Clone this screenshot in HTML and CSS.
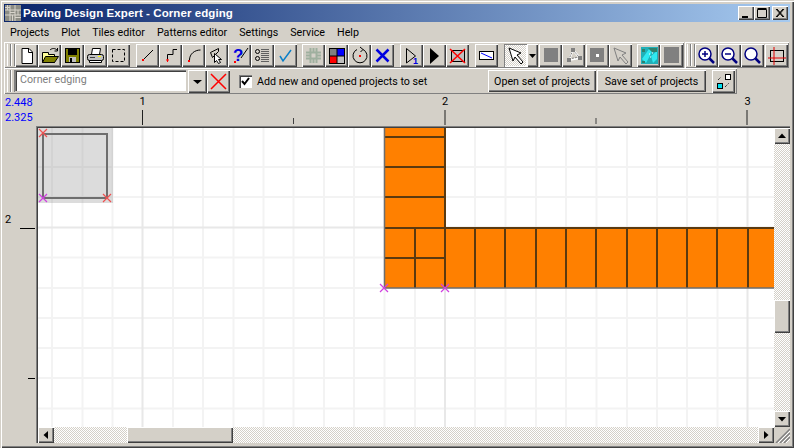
FILE: index.html
```html
<!DOCTYPE html>
<html lang="en">
<head>
<meta charset="utf-8">
<title>Paving Design Expert - Corner edging</title>
<link rel="stylesheet" href="styles.css">
</head>
<body>
<div class="window">
  <header class="titlebar">
    <svg class="appicon" width="16" height="16" viewBox="0 0 16 16"><rect width="16" height="16" fill="#8c8c84"/><path d="M0 5h16M0 10h16M5 0v16M10 0v16M2.500 0v5M13 5v5M7.500 10v6M0 2.500h5M5 7.500h5M10 12.500h6" stroke="#d8d4cc" fill="none"/></svg>
    <span class="title-text">Paving Design Expert - Corner edging</span>
    <div class="caption-btns">
      <button class="capbtn"><svg width="16" height="14" viewBox="0 0 16 14"><path d="M4 10.500h6M4 11.500h6" stroke="#000"/></svg></button>
      <button class="capbtn"><svg width="16" height="14" viewBox="0 0 16 14"><path d="M3.500 3.500h9v8h-9zM3.500 2.500h9" stroke="#000" fill="none"/></svg></button>
      <button class="capbtn capclose"><svg width="16" height="14" viewBox="0 0 16 14"><path d="M4 3l7 8M5 3l7 8M11 3l-7 8M12 3l-7 8" stroke="#000"/></svg></button>
    </div>
  </header>
  <nav class="menubar">
    <span>Projects</span><span>Plot</span><span>Tiles editor</span><span>Patterns editor</span><span>Settings</span><span>Service</span><span>Help</span>
  </nav>

  <div class="toolrow">
    <div class="toolbar tb-main">
      <i class="grip"></i>
      <button class="tb"><svg viewBox="0 0 23 23"><path d="M7 4.500h7l3.500 3.500v11.500H7z" fill="#fff" stroke="#000"/><path d="M13.500 4.500v4h4" fill="none" stroke="#000"/></svg></button>
      <button class="tb"><svg viewBox="0 0 23 23"><path d="M4.500 18.500v-10h6v2h6v8z" fill="#ffff99" stroke="#000"/><path d="M4.500 18.500l3-6h13l-4 6z" fill="#808000" stroke="#000"/><path d="M12 6c2-2 5-2 7 0M19.500 4v3h-3" fill="none" stroke="#000"/></svg></button>
      <button class="tb"><svg viewBox="0 0 23 23"><rect x="4.500" y="4.500" width="14" height="14" fill="#808000" stroke="#000"/><rect x="7" y="5" width="9" height="6" fill="#000"/><rect x="8" y="13" width="7" height="5" fill="#c0c0c0"/><rect x="9" y="14" width="2" height="4" fill="#000"/></svg></button>
      <button class="tb"><svg viewBox="0 0 23 23"><path d="M8.500 4.500h8l-1 6h-8z" fill="#fff" stroke="#000"/><rect x="3.500" y="10.500" width="16" height="6" rx="2" fill="#c0c0c0" stroke="#000"/><path d="M5.500 16.500h12v2h-12z" fill="#fff" stroke="#000"/><path d="M14 12.500h3" stroke="#ff0"/><path d="M6 13.500h5" stroke="#404040"/></svg></button>
      <button class="tb"><svg viewBox="0 0 23 23"><rect x="5.500" y="5.500" width="12" height="12" fill="none" stroke="#000" stroke-dasharray="3 2"/></svg></button>
      <i class="sep"></i>
      <button class="tb"><svg viewBox="0 0 23 23"><path d="M7 16L17 6" stroke="#000" fill="none"/><rect x="6" y="15" width="2" height="2" fill="#f00"/></svg></button>
      <button class="tb"><svg viewBox="0 0 23 23"><path d="M8.500 16v-5.500h5.500V5.500h4" stroke="#000" fill="none"/><path d="M7 16h3M8.500 15v3" stroke="#f00"/></svg></button>
      <button class="tb"><svg viewBox="0 0 23 23"><path d="M7.500 16c0-6 5-10 11-10" stroke="#000" fill="none"/><rect x="6" y="16" width="2" height="2" fill="#f00"/></svg></button>
      <button class="tb"><svg viewBox="0 0 23 23"><path d="M5.500 8.500l8-4v3l-6 6z" fill="none" stroke="#000"/><path d="M9.500 9.500v9l2-2 2 3 2-1-2-3h3z" fill="#fff" stroke="#000"/></svg></button>
      <button class="tb"><svg viewBox="0 0 23 23"><text class="qmark" x="5" y="17">?</text><path d="M13 14l7-10" stroke="#000"/><rect x="6" y="17" width="2" height="2" fill="#f00"/></svg></button>
      <button class="tb"><svg viewBox="0 0 23 23"><circle cx="6.500" cy="7.500" r="2" fill="none" stroke="#000"/><circle cx="6.500" cy="14.500" r="2" fill="none" stroke="#000"/><path d="M10 5.500h8M10 7.500h8M10 9.500h8M10 11.500h8M10 13.500h8M10 15.500h8M10 17.500h8" stroke="#606060"/></svg></button>
      <button class="tb"><svg viewBox="0 0 23 23"><path d="M6 12l3 5 8-11" stroke="#0a7fc8" stroke-width="1.500" fill="none"/></svg></button>
      <i class="sep-m"></i>
      <button class="tb"><svg viewBox="0 0 23 23"><path d="M4 8.500h15M4 14.500h15M8.500 4v15M14.500 4v15M4 11.500h4M15 11.500h4M11.500 4v4M11.500 15v4" stroke="#9fb09f" stroke-width="2" fill="none"/></svg></button>
      <button class="tb"><svg viewBox="0 0 23 23"><rect x="4" y="4" width="16" height="16" fill="#000"/><rect x="5" y="5" width="6.500" height="6.500" fill="#808080"/><rect x="12.500" y="5" width="6.500" height="6.500" fill="#00f"/><rect x="5" y="12.500" width="6.500" height="6.500" fill="#f00"/><rect x="12.500" y="12.500" width="6.500" height="6.500" fill="#c0c0c0"/></svg></button>
      <button class="tb"><svg viewBox="0 0 23 23"><path d="M15 5.500a7 7 0 1 1-6 0" fill="none" stroke="#000"/><path d="M12 3l3 2.500-2.500 2.500" fill="none" stroke="#000"/><rect x="11" y="11" width="2" height="2" fill="#f00"/></svg></button>
      <button class="tb"><svg viewBox="0 0 23 23"><path d="M5.500 5.500l12 12M17.500 5.500l-12 12" stroke="#0000e0" stroke-width="2.500"/></svg></button>
      <i class="sep"></i>
      <button class="tb"><svg viewBox="0 0 23 23"><path d="M6.500 4.500l9 7.500-9 7z" fill="none" stroke="#000"/><text class="one" x="13" y="20">1</text></svg></button>
      <button class="tb"><svg viewBox="0 0 23 23"><path d="M7 4l9 8-9 8z" fill="#000"/></svg></button>
      <button class="tb"><svg viewBox="0 0 23 23"><rect x="5.500" y="6.500" width="13" height="11" fill="#c0c0c0" stroke="#000"/><path d="M4 5l15 14M19 5L4 19" stroke="#f00" stroke-width="1.500"/></svg></button>
      <i class="sep"></i>
      <button class="tb"><svg viewBox="0 0 23 23"><rect x="4.500" y="7.500" width="14" height="8" fill="#fff" stroke="#000"/><path d="M6 9l11 5" stroke="#00f"/></svg></button>
      <i class="sep"></i>
      <button class="tb pressed"><svg viewBox="0 0 23 23"><path d="M5 4l4 13 2-4 6 7 2-2-6-7 4-2z" fill="#fff" stroke="#000"/></svg></button>
      <button class="tb tb-drop"><svg viewBox="0 0 11 23"><path d="M2 10h7l-3.500 4z" fill="#000"/></svg></button>
      <i class="sep-xs"></i>
      <button class="tb"><svg viewBox="0 0 23 23"><rect x="5" y="4" width="14" height="14" fill="#808080"/></svg></button>
      <button class="tb"><svg viewBox="0 0 23 23"><path d="M11 6l-4 10M11 6l7 8M7 16l11-2" stroke="#fff" stroke-width="2"/><path d="M11 6l-4 9M11 6l6 7M7 15l10-2" stroke="#808080" stroke-dasharray="2 1"/><rect x="9" y="4" width="4" height="4" fill="#808080"/><rect x="5" y="14" width="4" height="4" fill="#808080"/><rect x="16" y="12" width="4" height="4" fill="#808080"/></svg></button>
      <i class="sep-xs"></i>
      <button class="tb"><svg viewBox="0 0 23 23"><rect x="4" y="4" width="14" height="14" fill="#808080"/><rect x="10" y="10" width="3" height="3" fill="#fff"/></svg></button>
      <button class="tb"><svg viewBox="0 0 23 23"><path d="M5 4l4 13 2-4 6 7 2-2-6-7 4-2z" fill="#d4d0c8" stroke="#808080"/></svg></button>
      <i class="sep-m"></i>
      <button class="tb"><svg class="mosaic" viewBox="0 0 23 23"><rect x="4" y="3" width="17" height="17" fill="#20b0b8"/><path d="M5 15l7-10 3 3-6 11zM14 12l6-5v8l-4 4z" fill="#30e8f0"/><path d="M11 4h9v4h-5zM5 5h3v3H5zM5 17h3v2H5z" fill="#30806c"/><path d="M12 10h1M15 9h1M13 13h1" stroke="#fff"/></svg></button>
      <button class="tb"><svg viewBox="0 0 23 23"><rect x="4" y="3" width="15" height="16" fill="#808080"/></svg></button>
    </div>
    <div class="toolbar tb-zoom">
      <i class="grip"></i>
      <button class="tb"><svg viewBox="0 0 23 23"><circle cx="10" cy="10" r="6" fill="#fff" stroke="#000080" stroke-width="1.500"/><path d="M14.500 14.500l4.500 4.500" stroke="#000080" stroke-width="2.500"/><path d="M7 10h6M10 7v6" stroke="#000080" stroke-width="1.500"/></svg></button>
      <button class="tb"><svg viewBox="0 0 23 23"><circle cx="10" cy="10" r="6" fill="#fff" stroke="#000080" stroke-width="1.500"/><path d="M14.500 14.500l4.500 4.500" stroke="#000080" stroke-width="2.500"/><path d="M7 10h6" stroke="#000080" stroke-width="1.500"/></svg></button>
      <button class="tb"><svg viewBox="0 0 23 23"><circle cx="10" cy="10" r="6" fill="#fff" stroke="#000080" stroke-width="1.500"/><path d="M14.500 14.500l4.500 4.500" stroke="#000080" stroke-width="2.500"/></svg></button>
      <button class="tb tb-last"><svg viewBox="0 0 23 23"><rect x="5.500" y="6.500" width="13" height="11" fill="none" stroke="#000"/><path d="M3 14h18M9 3v18" stroke="#e00000"/></svg></button>
    </div>
  </div>

  <div class="toolbar tb-second">
    <i class="grip"></i>
    <div class="combo">Corner edging</div>
    <button class="tb tb-arrow"><svg viewBox="0 0 19 23"><path d="M5 10h9l-4.500 4z" fill="#000"/></svg></button>
    <button class="tb"><svg viewBox="0 0 23 23"><path d="M4 4l15 15M19 4L4 19" stroke="#f00" stroke-width="1.500"/></svg></button>
    <label class="check"><span class="box"><svg width="9" height="9" viewBox="0 0 9 9"><path d="M1 4l2.500 3L8 1" stroke="#000" stroke-width="2" fill="none"/></svg></span>Add new and opened projects to set</label>
    <button class="textbtn open">Open set of projects</button>
    <button class="textbtn save">Save set of projects</button>
    <button class="tb tb-link"><svg viewBox="0 0 23 23"><rect x="13.500" y="4.500" width="5" height="5" fill="#fff" stroke="#000"/><rect x="5.500" y="13.500" width="5" height="5" fill="#00e0f0" stroke="#000"/><path d="M6 10l3-3M13 17l4-4" stroke="#000" stroke-dasharray="1 1"/></svg></button>
  </div>

  <div class="workspace">
    <svg class="ruler-top" width="786" height="32" viewBox="4 94 786 32">
      <text class="coord" x="5" y="106">2.448</text>
      <text class="coord" x="5" y="121">2.325</text>
      <text class="rnum" x="139.500" y="105">1</text>
      <text class="rnum" x="442" y="105">2</text>
      <text class="rnum" x="744.500" y="105">3</text>
      <path d="M142.500 110v15M445 110v15M747 110v15" stroke="#202020" stroke-width="1"/>
      <path d="M293.500 118v6M596 118v6" stroke="#404040" stroke-width="1"/>
    </svg>
    <div class="work-row">
      <svg class="ruler-left" width="32" height="320" viewBox="4 126 32 320">
        <text class="rnum" x="5" y="223">2</text>
        <path d="M20 228.500h15M28 378.500h7" stroke="#000"/>
      </svg>
      <div class="view">
        <div class="view-top">
          <svg class="canvas" width="736" height="299" viewBox="38 128 736 299">
            <rect x="38" y="128" width="736" height="299" fill="#fff"/>
            <path class="grid" d="M52 128v299M82.500 128v299M112.500 128v299M173 128v299M203 128v299M233.500 128v299M263.500 128v299M293.500 128v299M324 128v299M354 128v299M384.500 128v299M415 128v299M475 128v299M505.500 128v299M536 128v299M566 128v299M596.500 128v299M627 128v299M657 128v299M687 128v299M717.500 128v299M38 167h736M38 197h736M38 257.500h736M38 288h736M38 318h736M38 348h736M38 378h736M38 408.500h736"/>
            <path class="grid-major" d="M142.500 128v299M445 128v299M747.500 128v299M38 227.500h736"/>
            <rect x="38" y="128" width="75" height="75" fill="#8c8c8c" fill-opacity=".3"/>
            <rect x="43" y="134" width="64" height="64" fill="none" stroke="#6e6e6e" stroke-width="2"/>
            <path d="M384.500 128h60.500v99.500h329v60.500H384.500z" fill="#ff8000"/>
            <path class="tile" d="M384 137h61M384 167h61M384 197h61M384 228H774M384 258h61M415 228V288M445 128v160M475 228V288M505 228V288M536 228V288M566 228V288M596 228V288M627 228V288M657 228V288M687 228V288M717 228V288M748 228V288"/>
            <path class="tile-edge" d="M384.500 128v160H774"/>
            <path class="mark-red" d="M39 129l8 8M47 129l-8 8M103 194l8 8M111 194l-8 8"/>
            <path class="mark-pink" d="M39 194l8 8M47 194l-8 8M380 284l8 8M388 284l-8 8M441 284l8 8M449 284l-8 8"/>
          </svg>
          <div class="vscroll">
            <button class="sbtn"><svg width="16" height="16" viewBox="0 0 16 16"><path d="M4 10h8L8 5.500z" fill="#000"/></svg></button>
            <div class="vtrack"><div class="vthumb"></div></div>
            <button class="sbtn"><svg width="16" height="16" viewBox="0 0 16 16"><path d="M4 6h8l-4 4.500z" fill="#000"/></svg></button>
          </div>
        </div>
        <div class="hscroll">
          <button class="sbtn"><svg width="16" height="16" viewBox="0 0 16 16"><path d="M10 4v8L5.500 8z" fill="#000"/></svg></button>
          <div class="htrack"><div class="hthumb"></div></div>
          <button class="sbtn"><svg width="16" height="16" viewBox="0 0 16 16"><path d="M6 4v8l4.500-4z" fill="#000"/></svg></button>
          <svg class="sizegrip" width="16" height="16" viewBox="0 0 16 16"><path d="M16 2L2 16M16 6L6 16M16 10l-6 6" stroke="#808080" stroke-width="1.500"/><path d="M16 4L4 16M16 8l-8 8M16 12l-4 4" stroke="#fff"/></svg>
        </div>
      </div>
    </div>
  </div>
</div>
</body>
</html>
```
FILE: styles.css
```css
* { box-sizing: border-box; }
html, body { margin: 0; padding: 0; height: 100%; overflow: hidden; }
body { background: #d4d0c8; font-family: "Roboto", "Liberation Sans", sans-serif; font-size: 10.700px; color: #000; }
button { margin: 0; padding: 0; border: 0; font: inherit; color: inherit; display: block; }
.window {
  width: 794px; height: 448px; padding: 4px 4px 0;
  background: #d4d0c8; display: flex; flex-direction: column;
  box-shadow: inset 1px 1px 0 #d4d0c8, inset 2px 2px 0 #fff, inset -1px -1px 0 #404040, inset -2px -2px 0 #808080;
}
.titlebar {
  height: 18px; flex: none; display: flex; align-items: center; padding-left: 1px;
  background: linear-gradient(90deg, #0a246a, #a6caf0); color: #fff;
}
.appicon { flex: none; }
.title-text { margin-left: 2px; font-family: "Liberation Sans", sans-serif; font-weight: 700; font-size: 11.500px; letter-spacing: .08px; }
.caption-btns { margin-left: auto; display: flex; padding-right: 2px; }
.capbtn { width: 16px; height: 14px; background: #d4d0c8; box-shadow: inset 1px 1px 0 #fff, inset -1px -1px 0 #404040, inset -2px -2px 0 #808080; }
.capclose { margin-left: 2px; }
.capbtn svg { display: block; }
.menubar { height: 20px; flex: none; display: flex; align-items: center; padding-left: 6px; gap: 12px; }
.toolrow { display: flex; flex: none; gap: 1px; }
.toolbar { display: flex; align-items: flex-start; box-shadow: inset 1px 1px 0 #fff, inset -1px -1px 0 #808080; }
.tb-main { width: 680px; height: 26px; padding: 2px 0 0 3px; }
.tb-zoom { width: 104px; height: 26px; padding: 2px 0 0 2px; }
.tb-second { width: 733px; height: 26px; flex: none; padding: 2px 0 0 3px; }
.grip { display: block; width: 8px; height: 22px; flex: none; border-left: 1px solid #fff; border-right: 1px solid #808080; background: linear-gradient(90deg, #d4d0c8 0 2px, #808080 2px 3px, #fff 3px 4px, #d4d0c8 4px); }
.tb { width: 23px; height: 23px; flex: none; background: #d4d0c8; box-shadow: inset 1px 1px 0 #fff, inset -1px -1px 0 #404040, inset -2px -2px 0 #808080; }
.tb svg { display: block; width: 100%; height: 100%; }
.sep { display: block; flex: none; width: 6px; }
.sep-m { display: block; flex: none; width: 5px; }
.sep-xs { display: block; flex: none; width: 1px; }
.pressed { background: repeating-conic-gradient(#d4d0c8 0 25%, #fff 0 50%) 0 0 / 2px 2px; box-shadow: inset 1px 1px 0 #808080, inset -1px -1px 0 #fff; }
.tb-drop { width: 11px; }
.tb-last { margin-left: 1px; }
.qmark { font: 700 17px "Liberation Sans", sans-serif; fill: #0000e0; }
.one { font: 700 9px "Liberation Sans", sans-serif; fill: #0000e0; }
.combo {
  width: 171px; height: 21px; flex: none; padding: 2px 0 0 5px; background: #fff; color: #808080;
  box-shadow: inset 1px 1px 0 #808080, inset 2px 2px 0 #404040, inset -1px -1px 0 #fff;
  line-height: 15px;
}
.tb-arrow { margin-left: 2px; width: 19px; }
.check { display: flex; align-items: center; height: 22px; width: 249px; flex: none; margin-left: 9px; gap: 5px; }
.box { width: 13px; height: 13px; flex: none; display: flex; align-items: center; justify-content: center; background: #fff; box-shadow: inset 1px 1px 0 #808080, inset 2px 2px 0 #404040, inset -1px -1px 0 #fff; }
.textbtn { height: 22px; flex: none; text-align: center; background: #d4d0c8; box-shadow: inset 1px 1px 0 #fff, inset -1px -1px 0 #404040, inset -2px -2px 0 #808080; }
.open { width: 108px; }
.save { width: 109px; margin-left: 1px; }
.tb-link { margin-left: 6px; }
.workspace { flex: 1; display: flex; flex-direction: column; min-height: 0; }
.ruler-top { display: block; flex: none; }
.work-row { display: flex; flex: 1; min-height: 0; }
.ruler-left { display: block; flex: none; }
.coord { font: 11px "Roboto", "Liberation Sans", sans-serif; fill: #0000ff; }
.rnum { font: 11px "Roboto", "Liberation Sans", sans-serif; fill: #000; }
.view { width: 754px; height: 317px; box-shadow: inset 1px 1px 0 #808080, inset 2px 2px 0 #404040; padding: 2px 0 0 2px; display: flex; flex-direction: column; }
.view-top { display: flex; height: 299px; flex: none; }
.canvas { display: block; flex: none; }
.vscroll { width: 16px; flex: none; display: flex; flex-direction: column; }
.sbtn { width: 16px; height: 16px; flex: none; background: #d4d0c8; box-shadow: inset 1px 1px 0 #fff, inset -1px -1px 0 #404040, inset -2px -2px 0 #808080; }
.sbtn svg { display: block; }
.vtrack { flex: 1; background: repeating-conic-gradient(#d4d0c8 0 25%, #fff 0 50%) 0 0 / 2px 2px; padding-top: 156px; }
.vthumb { height: 33px; background: #d4d0c8; box-shadow: inset 1px 1px 0 #fff, inset -1px -1px 0 #404040, inset -2px -2px 0 #808080; }
.hscroll { display: flex; height: 16px; flex: none; }
.htrack { width: 704px; flex: none; background: repeating-conic-gradient(#d4d0c8 0 25%, #fff 0 50%) 0 0 / 2px 2px; padding-left: 73px; }
.hthumb { width: 106px; height: 16px; background: #d4d0c8; box-shadow: inset 1px 1px 0 #fff, inset -1px -1px 0 #404040, inset -2px -2px 0 #808080; }
.sizegrip { display: block; flex: none; }
.grid { stroke: #f3f3f3; stroke-width: 2; fill: none; }
.grid-major { stroke: #e8e8e8; stroke-width: 2; fill: none; }
.tile { stroke: #5a3a10; stroke-width: 2; fill: none; }
.tile-edge { stroke: #6e6e6e; stroke-width: 1.500; fill: none; }
.mark-red { stroke: #f05050; stroke-width: 1.200; fill: none; }
.mark-pink { stroke: #d040e0; stroke-width: 1.200; fill: none; }
```
